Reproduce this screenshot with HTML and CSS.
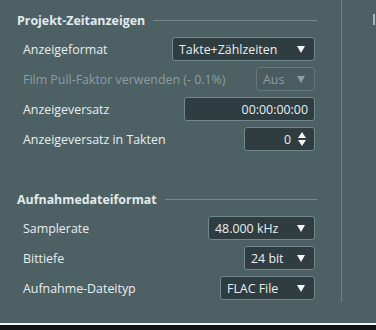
FILE: index.html
```html
<!DOCTYPE html>
<html>
  <head>
    <title>Projekt-Einstellungen</title>
    <link rel="stylesheet" href="styles.css">
  </head>
  <body>
    <div id="window">
      <div id="columns">
        <div id="left_column">

          <div class="section">
            <div class="heading"><span>Projekt-Zeitanzeigen</span></div>
            <ul>
              <li>
                <label>Anzeigeformat</label>
                <div class="field select w-format">
                  <span>Takte+Zählzeiten</span>
                  <svg class="arrow" width="8" height="7" viewBox="0 0 8 7"><path d="M0 0H8L4 7Z"/></svg>
                </div>
              </li>
              <li class="disabled">
                <label>Film Pull-Faktor verwenden (- 0.1%)</label>
                <div class="field select w-pull">
                  <span>Aus</span>
                  <svg class="arrow" width="8" height="7" viewBox="0 0 8 7"><path d="M0 0H8L4 7Z"/></svg>
                </div>
              </li>
              <li>
                <label>Anzeigeversatz</label>
                <div class="field number w-offset">
                  <span>00:00:00:00</span>
                </div>
              </li>
              <li>
                <label>Anzeigeversatz in Takten</label>
                <div class="field number spin w-bars">
                  <span>0</span>
                  <svg class="spinner" width="8" height="14" viewBox="0 0 8 14"><path d="M4 0L8 6H0Z M0 8H8L4 14Z"/></svg>
                </div>
              </li>
            </ul>
          </div>

          <div class="section second">
            <div class="heading"><span>Aufnahmedateiformat</span></div>
            <ul>
              <li>
                <label>Samplerate</label>
                <div class="field select w-rate">
                  <span>48.000 kHz</span>
                  <svg class="arrow" width="8" height="7" viewBox="0 0 8 7"><path d="M0 0H8L4 7Z"/></svg>
                </div>
              </li>
              <li>
                <label>Bittiefe</label>
                <div class="field select w-bits">
                  <span>24 bit</span>
                  <svg class="arrow" width="8" height="7" viewBox="0 0 8 7"><path d="M0 0H8L4 7Z"/></svg>
                </div>
              </li>
              <li>
                <label>Aufnahme-Dateityp</label>
                <div class="field select w-type">
                  <span>FLAC File</span>
                  <svg class="arrow" width="8" height="7" viewBox="0 0 8 7"><path d="M0 0H8L4 7Z"/></svg>
                </div>
              </li>
            </ul>
          </div>

        </div>
        <div id="right_column">
          <div class="edge_mark"></div>
        </div>
      </div>
    </div>
    <div id="taskbar"></div>
  </body>
</html>
```

FILE: styles.css
```css
body {
    margin: 0;
    background: #4d6064;
    color: #e8eef0;
    font-family: "Open Sans", "Noto Sans", sans-serif;
    font-size: 12.4px;
    overflow: hidden;
    width: 376px;
    height: 330px;
}

#window {
    height: 323px;
}

#columns {
    display: flex;
    height: 302px;
}

#left_column {
    width: 342px;
    border-right: 1px solid #6f8387;
    flex: none;
    padding-top: 11px;
    box-sizing: border-box;
}

#right_column {
    padding-left: 31px;
    padding-top: 14px;
}

.edge_mark {
    width: 2px;
    height: 11px;
    background: #9fb6bf;
}

#taskbar {
    border-top: 2px solid #f4f6f6;
    background: #111314;
    height: 5px;
}

.section {
    padding: 0 24px 0 17px;
}

.section.second {
    margin-top: 39px;
}

.heading {
    display: flex;
    align-items: center;
    gap: 8px;
    height: 18px;
    font-size: 12.4px;
    font-weight: bold;
    color: #e2eaed;
}

.heading::after {
    content: "";
    flex: 1;
    height: 1px;
    background: #74898d;
}

ul {
    margin: 8px 0 0 0;
    padding: 0 2px 0 6px;
    list-style: none;
}

li {
    display: flex;
    align-items: center;
    justify-content: space-between;
    height: 24px;
    margin-bottom: 6px;
}

li.disabled {
    color: #8c9ea2;
}

.field {
    height: 24px;
    box-sizing: border-box;
    border: 1px solid #73888c;
    border-radius: 3px;
    background: #2f3d41;
    display: flex;
    align-items: center;
    padding: 0 9px 0 6px;
}

.select {
    justify-content: space-between;
}

.number {
    justify-content: flex-end;
    padding-right: 6px;
}

.number.spin {
    gap: 7px;
    padding-right: 8px;
}

.arrow, .spinner {
    fill: #f2f5f6;
}

li.disabled .field {
    background: #4a5c60;
    border-color: #65797d;
}

li.disabled .arrow {
    fill: #8c9ea2;
}

.w-format { width: 143px; }
.w-pull { width: 59px; }
.w-offset { width: 131px; }
.w-bars { width: 71px; }
.w-rate { width: 107px; }
.w-bits { width: 71px; }
.w-type { width: 95px; }
```
